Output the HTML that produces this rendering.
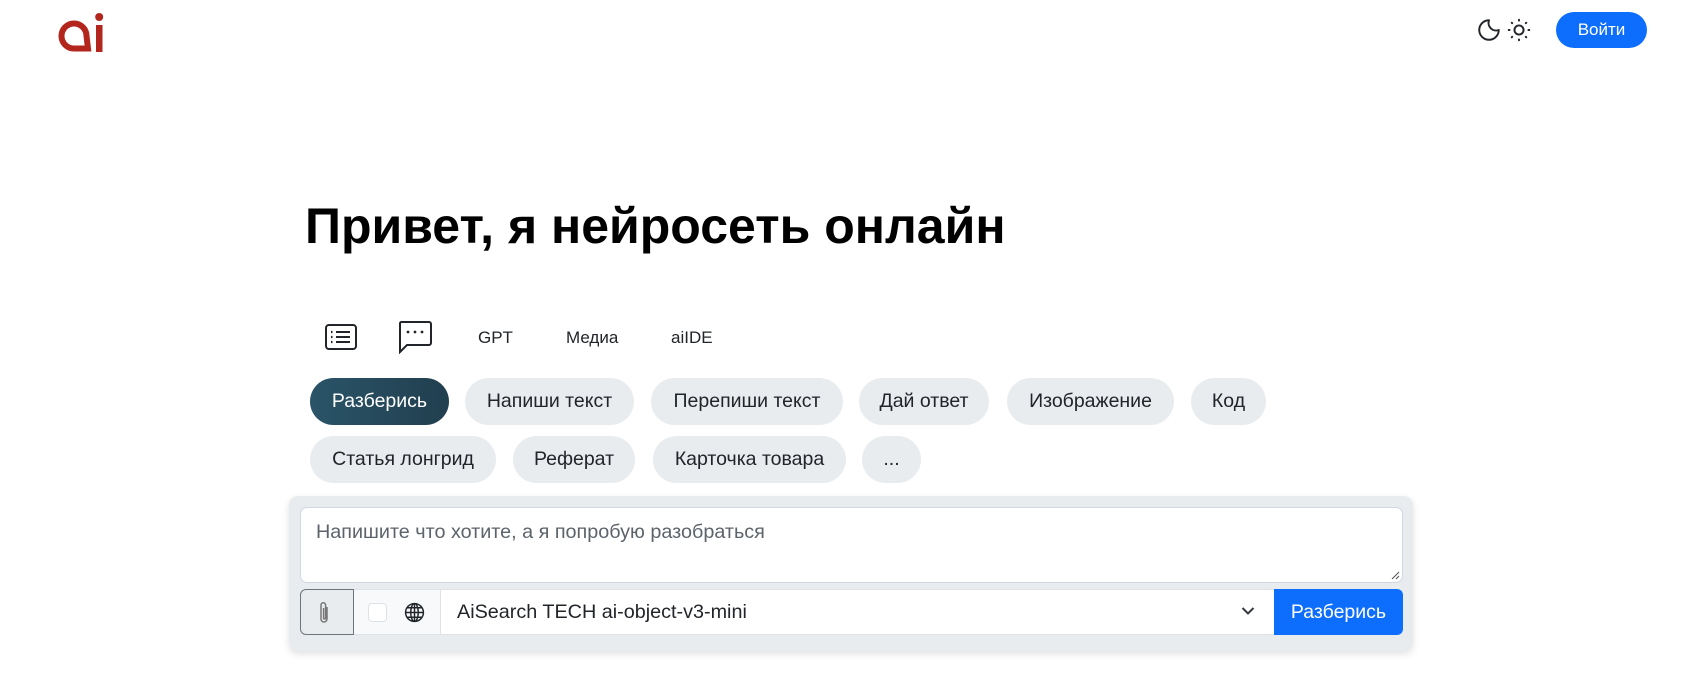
<!DOCTYPE html>
<html><head><meta charset="utf-8"><style>
*{box-sizing:border-box;margin:0;padding:0}
body{width:1703px;height:689px;background:#fff;font-family:"Liberation Sans",sans-serif;color:#212529;position:relative;overflow:hidden}
.abs{position:absolute}
h1{position:absolute;left:305px;top:197px;font-size:50px;font-weight:700;color:#000}
.tab{position:absolute;top:328px;font-size:17px;color:#212529}
.chip{position:absolute;height:47px;border-radius:24px;background:#e9ecef;font-size:19.5px;line-height:47px;text-align:center;color:#212529}
.chip.act{background:linear-gradient(90deg,#2a5468,#213f4f);color:#fff}
</style></head><body>
<svg class="abs" style="left:56px;top:10px" width="52" height="44" viewBox="0 0 52 44">
<path d="M32 38.5 H18 A12.5 12.5 0 1 1 30.5 26 Z" fill="none" stroke="#b3261e" stroke-width="6" stroke-linejoin="miter"/>
<rect x="40" y="15" width="6.5" height="27" fill="#b3261e"/><circle cx="43.2" cy="7" r="4" fill="#b3261e"/>
</svg>
<svg class="abs" style="left:1476px;top:17px" width="26" height="26" viewBox="0 0 24 24"><path d="M12 3a7 7 0 0 0 9 9 9 9 0 1 1-9-9z" fill="none" stroke="#212529" stroke-width="1.8" stroke-linejoin="round"/></svg>
<svg class="abs" style="left:1506px;top:17px" width="26" height="26" viewBox="0 0 24 24" fill="none" stroke="#212529" stroke-width="1.8" stroke-linecap="round"><circle cx="12" cy="12" r="4.2"/><path d="M12 2.5v.8M12 20.7v.8M2.5 12h.8M20.7 12h.8M5.3 5.3l.4.4M18.3 18.3l.4.4M5.3 18.7l.4-.4M18.3 5.7l.4-.4"/></svg>
<div class="abs" style="left:1556px;top:12px;width:91px;height:36px;border-radius:18px;background:#0d6efd;color:#fff;font-size:17px;line-height:36px;text-align:center">Войти</div>
<h1>Привет, я нейросеть онлайн</h1>
<svg class="abs" style="left:324px;top:323px" width="34" height="28" viewBox="0 0 34 28" fill="none" stroke="#212529" stroke-width="2"><rect x="2" y="2" width="30" height="24" rx="3"/><path d="M12 9h14M12 14h14M12 19h14" /><path d="M7 9h1.5M7 14h1.5M7 19h1.5" stroke-width="2.2"/></svg>
<svg class="abs" style="left:397px;top:320px" width="36" height="34" viewBox="0 0 36 34" fill="none" stroke="#212529" stroke-width="2"><path d="M4 2h28a2 2 0 0 1 2 2v19a2 2 0 0 1-2 2H10l-7 7V4a2 2 0 0 1 1-2z"/><circle cx="11" cy="12" r="1.4" fill="#212529" stroke="none"/><circle cx="18" cy="12" r="1.4" fill="#212529" stroke="none"/><circle cx="25" cy="12" r="1.4" fill="#212529" stroke="none"/></svg>
<div class="tab" style="left:478px">GPT</div>
<div class="tab" style="left:566px">Медиа</div>
<div class="tab" style="left:671px">aiIDE</div>
<div class="chip act" style="left:310px;top:378px;width:139px">Разберись</div>
<div class="chip" style="left:465px;top:378px;width:169px">Напиши текст</div>
<div class="chip" style="left:651px;top:378px;width:192px">Перепиши текст</div>
<div class="chip" style="left:859px;top:378px;width:130px">Дай ответ</div>
<div class="chip" style="left:1007px;top:378px;width:167px">Изображение</div>
<div class="chip" style="left:1191px;top:378px;width:75px">Код</div>
<div class="chip" style="left:310px;top:436px;width:186px">Статья лонгрид</div>
<div class="chip" style="left:513px;top:436px;width:122px">Реферат</div>
<div class="chip" style="left:653px;top:436px;width:193px">Карточка товара</div>
<div class="chip" style="left:862px;top:436px;width:59px">...</div>
<div class="abs" style="left:289px;top:496px;width:1124px;height:155px;background:#e9ecef;border-radius:9px;box-shadow:0 3px 8px rgba(0,0,0,.12)"></div>
<div class="abs" style="left:300px;top:507px;width:1103px;height:76px;background:#fff;border:1px solid #cfd8e3;border-radius:7px;font-size:19.8px;color:#5c636a;padding:13px 15px">Напишите что хотите, а я попробую разобраться</div>
<svg class="abs" style="left:1391px;top:571px" width="9" height="9" viewBox="0 0 9 9" stroke="#555" stroke-width="1"><path d="M1 8L8 1M5 8L8 5"/></svg>
<div class="abs" style="left:300px;top:589px;width:54px;height:46px;background:#e9ecef;border:1px solid #6c757d;border-radius:6px 0 0 6px"></div>
<svg class="abs" style="left:318px;top:601px" width="14" height="24" viewBox="0 0 14 24" fill="none" stroke="#777" stroke-width="1.5"><path d="M9 6v12a3 3 0 0 1-6 0V4a2.3 2.3 0 0 1 4.6 0v13a1 1 0 0 1-2 0V7"/></svg>
<div class="abs" style="left:354px;top:589px;width:86px;height:46px;background:#f8f9fa;border-top:1px solid #dee2e6;border-bottom:1px solid #dee2e6"></div>
<div class="abs" style="left:368px;top:603px;width:19px;height:19px;border:1px solid #dee2e6;border-radius:4px;background:#fff"></div>
<svg class="abs" style="left:404px;top:602px" width="21" height="21" viewBox="0 0 20 20" fill="none" stroke="#212529" stroke-width="1.4"><circle cx="10" cy="10" r="8.5"/><ellipse cx="10" cy="10" rx="3.6" ry="8.5"/><path d="M1.5 10h17M3 5.5h14M3 14.5h14M10 1.5v17"/></svg>
<div class="abs" style="left:440px;top:589px;width:835px;height:46px;background:#fff;border:1px solid #dee2e6;font-size:19.8px;line-height:44px;padding-left:16px;color:#212529">AiSearch TECH ai-object-v3-mini</div>
<svg class="abs" style="left:1241px;top:606px" width="14" height="10" viewBox="0 0 14 10" fill="none" stroke="#343a40" stroke-width="2"><path d="M1.5 2l5.5 5.5L12.5 2"/></svg>
<div class="abs" style="left:1274px;top:589px;width:129px;height:46px;background:#0d6efd;color:#fff;border-radius:0 6px 6px 0;font-size:19.5px;line-height:46px;text-align:center">Разберись</div>
</body></html>
